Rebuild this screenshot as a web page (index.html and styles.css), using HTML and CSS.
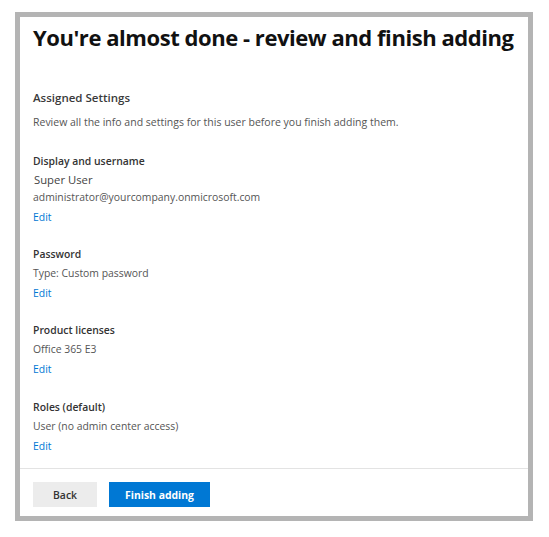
FILE: index.html
```html
<!DOCTYPE html>
<html>
<head>
<meta charset="utf-8">
<link rel="stylesheet" href="styles.css">
</head>
<body>
<div class="frame">
  <div class="content">
    <h1 class="title">You're almost done - review and finish adding</h1>
    <div class="intro">
      <div class="intro-head">Assigned Settings</div>
      <div class="intro-text">Review all the info and settings for this user before you finish adding them.</div>
    </div>
    <div class="section">
      <div class="sec-head">Display and username</div>
      <div class="val val-name">Super User</div>
      <div class="val val-tight">administrator@yourcompany.onmicrosoft.com</div>
      <a class="edit">Edit</a>
    </div>
    <div class="section">
      <div class="sec-head">Password</div>
      <div class="val">Type: Custom password</div>
      <a class="edit">Edit</a>
    </div>
    <div class="section">
      <div class="sec-head">Product licenses</div>
      <div class="val">Office 365 E3</div>
      <a class="edit">Edit</a>
    </div>
    <div class="section section-last">
      <div class="sec-head">Roles (default)</div>
      <div class="val">User (no admin center access)</div>
      <a class="edit">Edit</a>
    </div>
  </div>
  <div class="footer">
    <button class="btn btn-back">Back</button>
    <button class="btn btn-primary">Finish adding</button>
  </div>
</div>
</body>
</html>
```
FILE: styles.css
```css
html, body {
  margin: 0;
  padding: 0;
  background: #ffffff;
}
body {
  font-family: "Open Sans", "Noto Sans", sans-serif;
  color: #333333;
}
.frame {
  margin: 12px 0 0 15px;
  width: 518px;
  height: 509px;
  box-sizing: border-box;
  border: 5px solid #b4b4b4;
  display: flex;
  flex-direction: column;
}
.content {
  padding: 0 13px;
  flex: 1;
}
.title {
  margin: 0;
  padding-top: 5px;
  font-size: 22px;
  font-weight: 700;
  line-height: 30px;
  color: #111111;
  letter-spacing: -0.45px;
  white-space: nowrap;
}
.intro {
  margin-top: 36px;
}
.intro-head {
  font-size: 11.5px;
  line-height: 20px;
  font-weight: 600;
  color: #3a3a3a;
}
.intro-text {
  margin-top: 4px;
  font-size: 10.5px;
  line-height: 20px;
  color: #555555;
}
.section {
  margin-top: 19px;
  display: flex;
  flex-direction: column;
  align-items: flex-start;
}
.section + .section {
  margin-top: 17px;
}
.section + .section-last {
  margin-top: 18px;
}
.sec-head {
  font-size: 10.4px;
  line-height: 20px;
  font-weight: 600;
  color: #333333;
}
.val {
  font-size: 10.4px;
  line-height: 20px;
  color: #555555;
  margin-top: -1px;
}
.val-name {
  font-size: 11.3px;
  padding-left: 1px;
  color: #444444;
}
.val-tight {
  margin-top: -3px;
}
.edit {
  font-size: 10.4px;
  line-height: 20px;
  color: #0078d4;
  cursor: pointer;
}
.footer {
  border-top: 1px solid #e3e3e3;
  height: 48px;
  box-sizing: border-box;
  display: flex;
  align-items: flex-start;
  gap: 12px;
  padding: 13px 0 0 13px;
}
.btn {
  height: 25px;
  border: none;
  font-family: "Open Sans", "Noto Sans", sans-serif;
  font-size: 10.4px;
  padding: 0;
  margin: 0;
}
.btn-back {
  width: 64px;
  background: #ececec;
  color: #333333;
  font-weight: 600;
}
.btn-primary {
  width: 101px;
  background: #0078d4;
  color: #ffffff;
  font-weight: 700;
}
```
